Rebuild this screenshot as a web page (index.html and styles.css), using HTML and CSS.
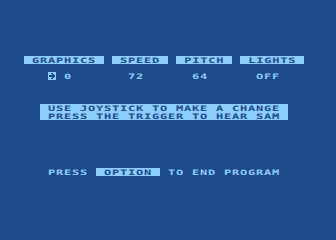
FILE: index.html
```html
<!DOCTYPE html>
<html lang="en">
<head>
    <meta charset="UTF-8">
    <title>SAM Setup</title>
    <link rel="stylesheet" href="styles.css">
</head>
<body>
    <div id="screen">
        <div class="row"> </div>
        <div class="row"> </div>
        <div class="row"> </div>
        <div class="row"> </div>
        <div class="row">  <span class="inv"> GRAPHICS </span> <span class="inv"> SPEED </span> <span class="inv"> PITCH </span> <span class="inv"> LIGHTS </span></div>
        <div class="row"> </div>
        <div class="row">     <span class="inv cursor"><svg viewBox="0 0 8 8" preserveAspectRatio="none"><path d="M3 1h2v1h1v1h1v2h-1v1h-1v1h-2v-1h1v-1h-3v-2h3v-1h-1z"/></svg></span> 0       72      64      OFF</div>
        <div class="row"> </div>
        <div class="row"> </div>
        <div class="row"> </div>
        <div class="row">    <span class="inv"> USE JOYSTICK TO MAKE A CHANGE </span></div>
        <div class="row">    <span class="inv"> PRESS THE TRIGGER TO HEAR SAM </span></div>
        <div class="row"> </div>
        <div class="row"> </div>
        <div class="row"> </div>
        <div class="row"> </div>
        <div class="row"> </div>
        <div class="row"> </div>
        <div class="row">     PRESS <span class="inv"> OPTION </span> TO END PROGRAM</div>
    </div>
</body>
</html>
```

FILE: styles.css
```css
body {
    margin: 0;
    width: 336px;
    height: 240px;
    padding: 24px 8px;
    box-sizing: border-box;
    background-color: #1d4a8b;
    color: #8ccdf9;
    font-family: "DejaVu Sans Mono", monospace;
    font-weight: bold;
    overflow: hidden;
}
/* 40 columns of 5px, stretched to 8px like the Atari text mode */
#screen {
    width: 200px;
    transform: scaleX(1.6);
    transform-origin: 0 0;
}
.row {
    height: 8px;
    line-height: 9px;
    font-size: 7.5px;
    letter-spacing: 0.485px;
    white-space: pre;
}
.inv {
    display: inline-block;
    height: 8px;
    vertical-align: top;
    background-color: #8ccdf9;
    color: #1d4a8b;
}
.cursor {
    width: 5px;
}
.cursor svg {
    display: block;
    width: 5px;
    height: 8px;
    fill: #1d4a8b;
}
```
